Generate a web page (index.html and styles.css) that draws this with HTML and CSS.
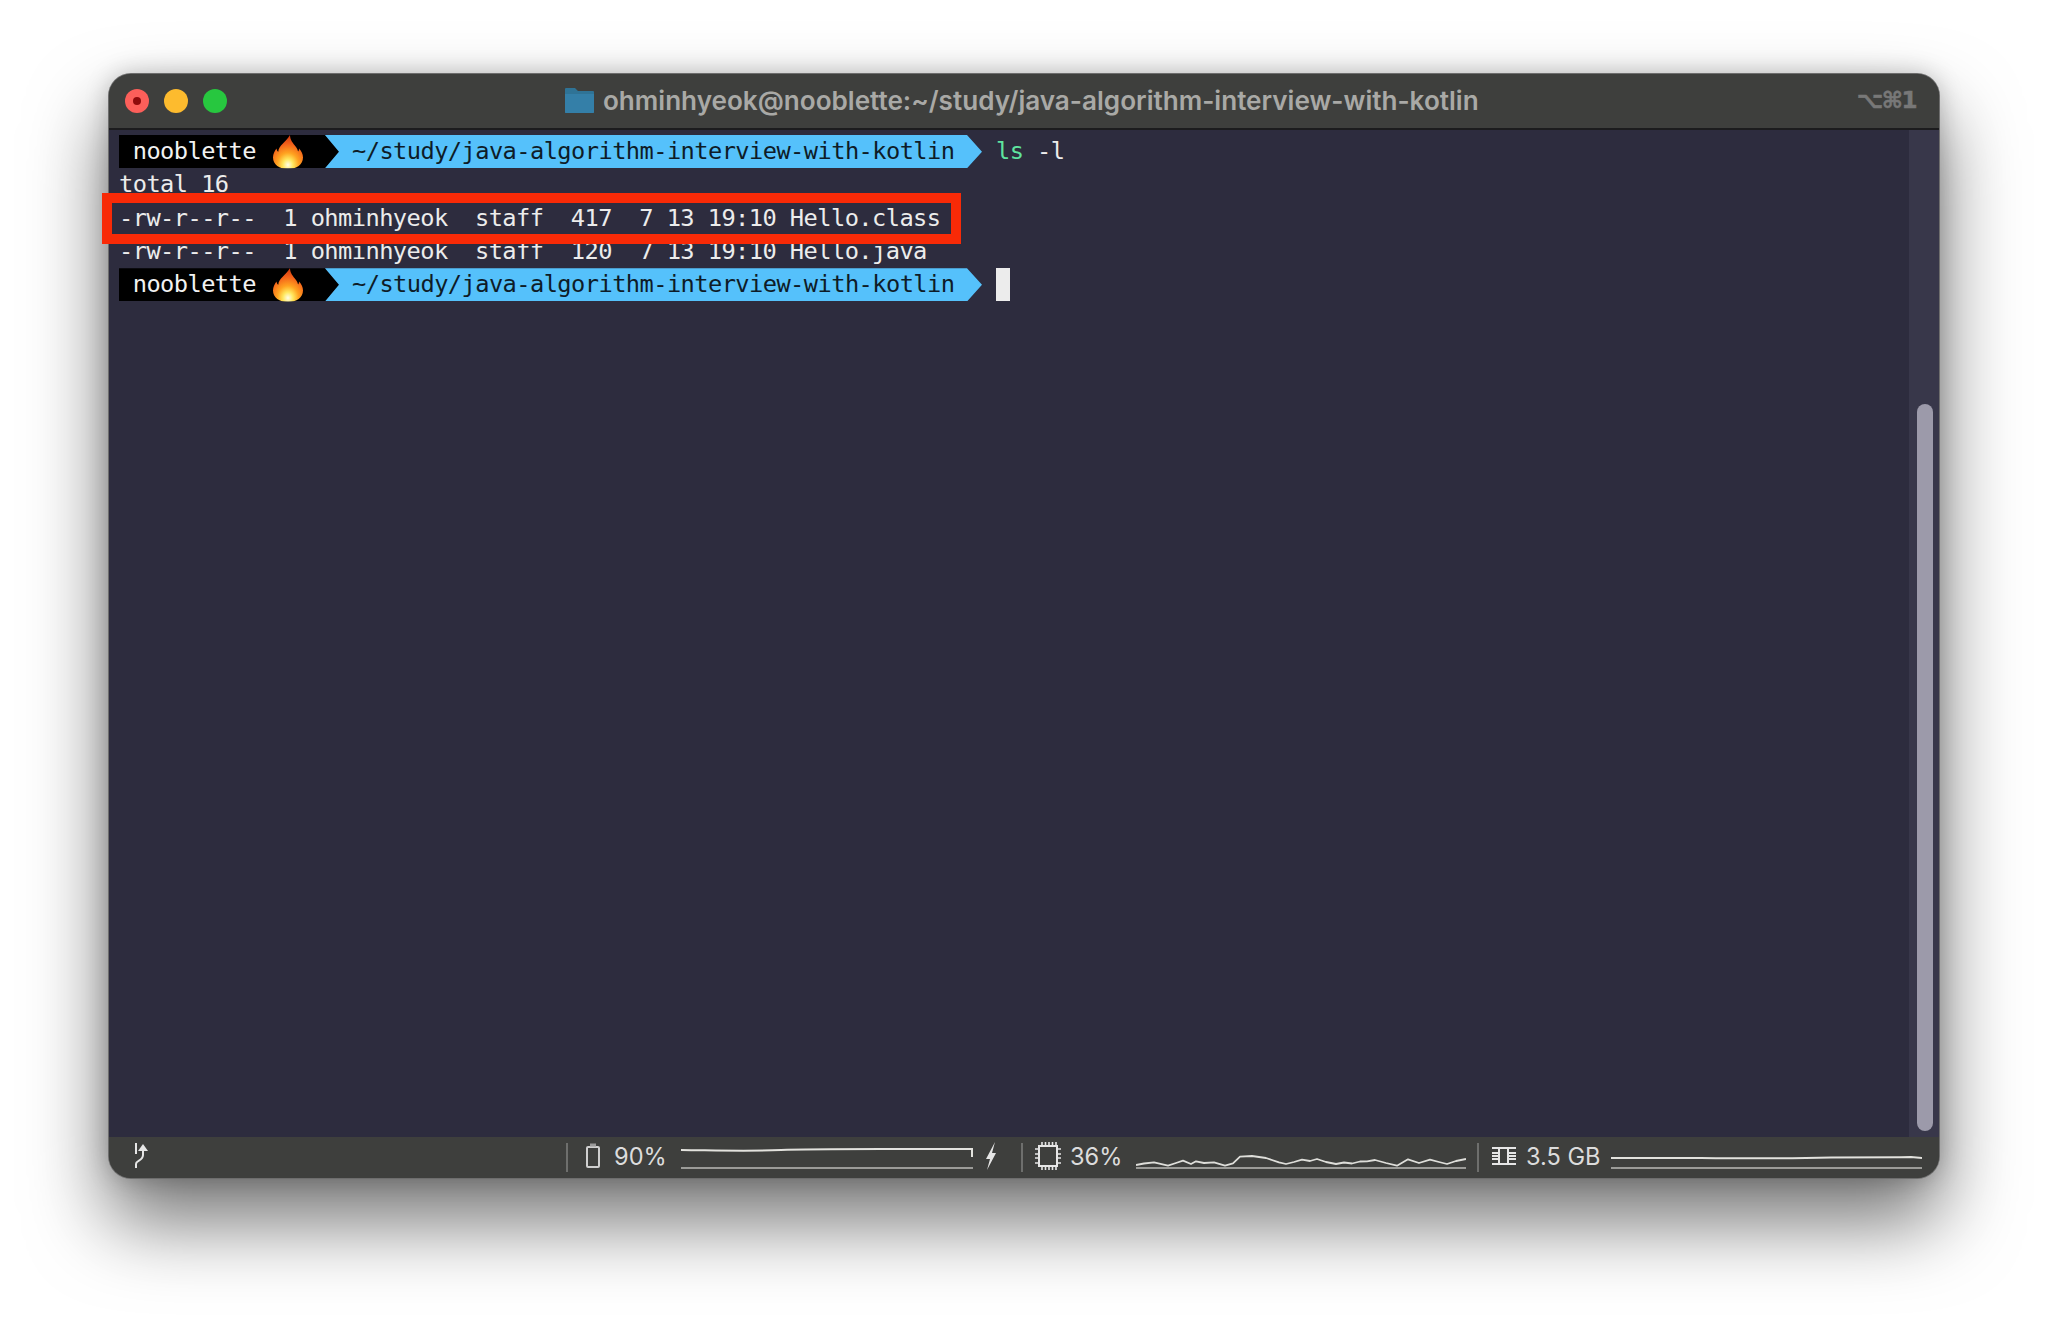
FILE: index.html
```html
<!DOCTYPE html>
<html lang="en">
<head>
<meta charset="utf-8">
<title>Terminal</title>
<link rel="stylesheet" href="styles.css">
</head>
<body>
<svg class="defs" width="0" height="0" aria-hidden="true">
  <defs>
    <radialGradient id="flameFill" cx="50%" cy="88%" r="85%">
      <stop offset="0" stop-color="#fffde8"/>
      <stop offset="0.2" stop-color="#ffe75e"/>
      <stop offset="0.42" stop-color="#ffa320"/>
      <stop offset="0.72" stop-color="#f4621a"/>
      <stop offset="1" stop-color="#d23a10"/>
    </radialGradient>
    <symbol id="flame" viewBox="0 0 30 34">
      <path fill="url(#flameFill)" d="M17 0c0 5 3 8 6 12 1.200 1.600 1.800 3 2 4.500.8-.7 1-1.700 1-3 2.500 2.600 4 5.500 4 9C30 29.500 23.500 34 15 34S0 29.500 0 22.500c0-3.500 1.500-6.500 3.500-9 .2 1.500.7 2.600 1.800 3.300C5.500 10.500 13 7 17 0z"/>
    </symbol>
  </defs>
</svg>
<main class="window">
  <header class="titlebar">
    <div class="lights">
      <span class="light light-red"></span>
      <span class="light light-yellow"></span>
      <span class="light light-green"></span>
    </div>
    <div class="title">
      <svg class="folder" viewBox="0 0 29 25"><path d="M1 0h9l3 3h15a1 1 0 0 1 1 1v20a1 1 0 0 1-1 1H1a1 1 0 0 1-1-1V1a1 1 0 0 1 1-1z" fill="#2f7396"/><path d="M0 6h29v18a1 1 0 0 1-1 1H1a1 1 0 0 1-1-1z" fill="#347fa8"/></svg>
      <span>ohminhyeok@nooblette:~/study/java-algorithm-interview-with-kotlin</span>
    </div>
    <div class="shortcut">⌥⌘1</div>
  </header>
  <section class="body">
    <div class="terminal">
      <div class="line">
        <span class="seg-user">nooblette<svg class="flame"><use href="#flame"/></svg></span>
        <span class="seg-path">~/study/java-algorithm-interview-with-kotlin</span>
        <span class="cmd"><span class="cmd-name">ls</span> -l</span>
      </div>
      <div class="line">total 16</div>
      <div class="line">-rw-r--r--  1 ohminhyeok  staff  417  7 13 19:10 Hello.class</div>
      <div class="line">-rw-r--r--  1 ohminhyeok  staff  120  7 13 19:10 Hello.java</div>
      <div class="line">
        <span class="seg-user">nooblette<svg class="flame"><use href="#flame"/></svg></span>
        <span class="seg-path">~/study/java-algorithm-interview-with-kotlin</span>
        <span class="cursor"></span>
      </div>
      <div class="highlight"></div>
    </div>
    <div class="scrolltrack"><div class="thumb"></div></div>
  </section>
  <footer class="status">
    <svg class="ico-branch" viewBox="0 0 14 26" fill="none" stroke="#e6e6e6" stroke-width="2"><path d="M2 0v11"/><path d="M2 25v-4c0-4 7-3 7-9V6"/><path d="M4 8l5-7 5 7z" fill="#e6e6e6" stroke="none"/></svg>
    <span class="sep sep-first"></span>
    <svg class="ico-battery" viewBox="0 0 14 26" fill="none" stroke="#cfcfcf" stroke-width="2"><rect x="1" y="5" width="12" height="20" rx="1"/><path d="M4 1.500h6v3H4z" fill="#9a9a9a" stroke="none"/></svg>
    <span class="stat stat-bat">90%</span>
    <svg class="chart chart-bat" viewBox="0 0 292 22" fill="none"><path d="M0 3c40 .5 70 1.500 100 0 30-1.500 60-1 191-1v8" stroke="#e3e3de" stroke-width="2"/><path d="M0 21h292" stroke="#9b9b98" stroke-width="2"/></svg>
    <svg class="ico-bolt" viewBox="0 0 12 28"><path d="M10 0L1 17h4L2 28l9-17H7z" fill="#e6e6e6"/></svg>
    <span class="sep sep-cpu"></span>
    <svg class="ico-cpu" viewBox="0 0 26 28" fill="none" stroke="#e6e6e6" stroke-width="2"><rect x="4" y="4" width="18" height="20"/><path d="M7 0v4M10.500 0v4M14 0v4M17.500 0v4M21 0v4M7 24v4M10.500 24v4M14 24v4M17.500 24v4M21 24v4M0 7h4M0 12h4M0 16h4M0 21h4M22 7h4M22 12h4M22 16h4M22 21h4" stroke-width="1.600"/></svg>
    <span class="stat stat-cpu">36%</span>
    <svg class="chart chart-cpu" viewBox="0 0 330 22" fill="none"><polyline stroke="#dededa" stroke-width="1.800" stroke-linejoin="round" points="0,18 8,16.500 18,15.300 32,18.700 40,16 47,13.700 55,17 60,14.300 68,16 78,15.300 89,18.700 97,16.300 104,9.700 116,9 130,11 143,15.300 150,17 158,15 166,12.700 174,14 181,12 190,15 200,17 208,15.500 216,16.500 224,14.500 231,14.300 239,13 250,16 261,18.700 272,12.300 283,16 294,12.700 303,15 311,17 320,14 330,12"/><path d="M0 21h330" stroke="#9b9b98" stroke-width="2"/></svg>
    <span class="sep sep-mem"></span>
    <svg class="ico-mem" viewBox="0 0 24 18" fill="none" stroke="#e6e6e6"><path d="M0 1h24M0 6h8M0 9h8M0 12h8M16 6h8M16 9h8M16 12h8M0 17h24" stroke-width="1.800"/><path d="M7 1v16M16 1v16" stroke-width="2"/></svg>
    <span class="stat stat-mem">3.5 GB</span>
    <svg class="chart chart-mem" viewBox="0 0 311 22" fill="none"><path d="M0 11h90c50 .5 90 .5 130-.5l70-.3 10-.2 11 1" stroke="#e3e3de" stroke-width="2"/><path d="M0 21h311" stroke="#9b9b98" stroke-width="2"/></svg>
  </footer>
</main>
</body>
</html>
```
FILE: styles.css
```css
* { box-sizing: border-box; }
html, body { margin: 0; height: 100%; }
body {
  background: #fff;
  padding: 74px 0 0 109px;
  overflow: hidden;
}
.defs { position: absolute; }
.window {
  width: 1830px;
  height: 1104px;
  display: flex;
  flex-direction: column;
  border-radius: 22px;
  background: #3d3e3c;
  box-shadow: 0 0 0 1px #6d6d6d, 0 42px 78px 2px rgba(0, 0, 0, .54), 0 0 24px rgba(0, 0, 0, .22);
}
.titlebar {
  flex: 0 0 56px;
  display: flex;
  align-items: center;
  background: #3e3f3d;
  border-bottom: 2px solid #1c1c1e;
  border-radius: 22px 22px 0 0;
  padding: 0 23px 0 16px;
}
.lights { display: flex; gap: 15px; width: 120px; }
.light { width: 24px; height: 24px; border-radius: 50%; display: block; position: relative; }
.light-red { background: #fc5f5a; }
.light-red::after {
  content: "";
  position: absolute;
  left: 8px; top: 8px;
  width: 8px; height: 8px;
  border-radius: 50%;
  background: #8e0b0c;
}
.light-yellow { background: #fdbb2e; }
.light-green { background: #27c73f; }
.title {
  flex: 1;
  display: flex;
  align-items: center;
  justify-content: center;
  gap: 9px;
  font: 600 26.1px "Inter", "Liberation Sans", sans-serif;
  color: #a9a9a6;
  white-space: nowrap;
  padding-right: 58px;
  margin-top: -2px;
}
.folder { width: 29px; height: 25px; flex: none; }
.shortcut {
  font: 700 23px "DejaVu Sans", sans-serif;
  color: #787878;
  letter-spacing: -1.5px;
  -webkit-text-stroke: .5px #787878;
  white-space: nowrap;
  margin-top: -3px;
}
.body { flex: 1; display: flex; min-height: 0; background: #2d2c3e; }
.terminal {
  flex: 1;
  position: relative;
  display: flex;
  flex-direction: column;
  padding: 5px 0 0 10px;
  font: 400 23.7px/33.3px "DejaVu Sans Mono", monospace;
  letter-spacing: -.57px;
  color: #ececec;
  white-space: pre;
}
.line { flex: none; height: 33.3px; display: flex; align-items: stretch; }
.seg-user {
  flex: none;
  width: 220px;
  padding-left: 13.7px;
  background: #000;
  color: #f2f2f2;
  display: flex;
  align-items: flex-start;
  clip-path: polygon(0 0, 206px 0, 100% 50%, 206px 100%, 0 100%);
}
.flame { width: 30px; height: 34px; margin-left: 17px; flex: none; }
.seg-path {
  flex: none;
  width: 657px;
  margin-left: -14px;
  padding-left: 27px;
  background: #55c1fb;
  color: #0e1c28;
  clip-path: polygon(0 0, 642px 0, 100% 50%, 642px 100%, 0 100%, 14px 50%);
}
.cmd { margin-left: 14px; color: #ececec; }
.cmd-name { color: #5fe39f; }
.cursor { flex: none; width: 14px; margin-left: 14px; background: #ececec; }
.highlight {
  position: absolute;
  left: -7px;
  top: 63px;
  width: 859px;
  height: 51px;
  border: 10px solid #f82a07;
  pointer-events: none;
}
.scrolltrack {
  flex: 0 0 30px;
  background: #38374a;
  padding: 274px 6px 6px 8px;
}
.thumb { width: 16px; height: 100%; border-radius: 8px; background: #9c9aaa; }
.status {
  flex: 0 0 41px;
  display: flex;
  align-items: center;
  background: #3e3f3d;
  border-radius: 0 0 22px 22px;
  padding-left: 25px;
  color: #dcdcdc;
}
.ico-branch { width: 14px; height: 26px; flex: none; margin-bottom: 3px; }
.sep { width: 2px; height: 29px; background: #6e6f6d; flex: none; }
.sep-first { margin-left: 418px; }
.ico-battery { width: 14px; height: 26px; margin-left: 18px; flex: none; margin-bottom: 5px; }
.stat {
  font: 400 23.6px "Inter", "Liberation Sans", sans-serif;
  color: #dcdcdc;
  white-space: nowrap;
  flex: none;
  margin-top: -2px;
}
.stat-bat { margin-left: 14px; width: 67px; }
.chart { height: 22px; flex: none; margin-top: 1px; }
.chart-bat { width: 292px; }
.ico-bolt { width: 12px; height: 28px; margin-left: 12px; flex: none; margin-bottom: 3px; }
.sep-cpu { margin-left: 24px; }
.ico-cpu { width: 26px; height: 28px; margin-left: 12px; flex: none; margin-bottom: 3px; }
.stat-cpu { margin-left: 9px; width: 66px; }
.chart-cpu { width: 330px; }
.sep-mem { margin-left: 11px; }
.ico-mem { width: 24px; height: 18px; margin-left: 13px; flex: none; margin-bottom: 3px; }
.stat-mem { margin-left: 10px; width: 85px; }
.chart-mem { width: 311px; }
```
